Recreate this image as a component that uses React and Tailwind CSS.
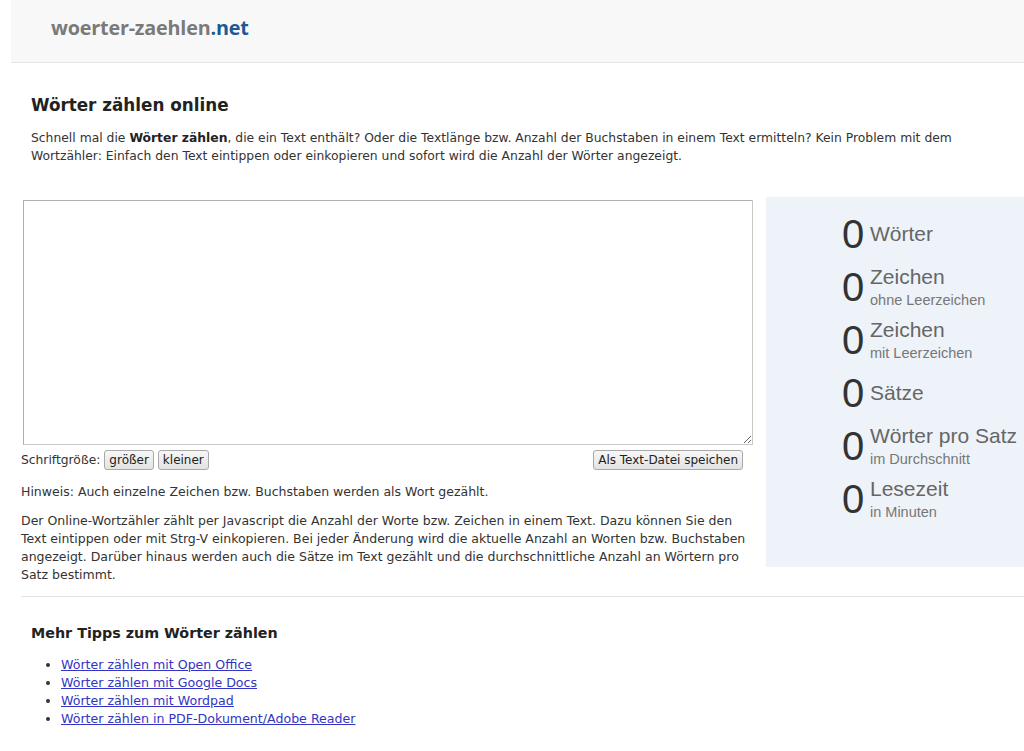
import React from 'react';

const body = { fontFamily: '"DejaVu Sans", Verdana, sans-serif' };
const arial = { fontFamily: '"Liberation Sans", Arial, sans-serif' };

const stats = [
  { label: 'Wörter' },
  { label: 'Zeichen', sub: 'ohne Leerzeichen' },
  { label: 'Zeichen', sub: 'mit Leerzeichen' },
  { label: 'Sätze' },
  { label: 'Wörter pro Satz', sub: 'im Durchschnitt' },
  { label: 'Lesezeit', sub: 'in Minuten' },
];

const links = [
  'Wörter zählen mit Open Office',
  'Wörter zählen mit Google Docs',
  'Wörter zählen mit Wordpad',
  'Wörter zählen in PDF-Dokument/Adobe Reader',
];

function Btn({ children }) {
  return (
    <button className="h-[20px] px-[4px] text-[12px] leading-[18px] text-[#222] border border-[#a9a9a9] rounded-[3px] bg-gradient-to-b from-[#f7f7f7] to-[#e3e3e3]">
      {children}
    </button>
  );
}

export default function App() {
  return (
    <div className="min-h-screen bg-white text-[#333]" style={body}>
      {/* header */}
      <header className="ml-[11px] h-[63px] bg-[#f8f8f8] border-b border-[#e6e6e6] flex items-center pl-[40px]">
        <div className="text-[19.8px] font-bold tracking-[-0.2px] text-[#7a7a7a] -mt-[6px]" style={{ fontFamily: '"Open Sans", sans-serif' }}>
          woerter-zaehlen<span className="text-[#1b5a92]">.net</span>
        </div>
      </header>

      <main className="pl-[21px]">
        <section className="pl-[10px] w-[990px]">
          <h1 className="mt-[32px] text-[16.8px] leading-[20px] font-bold text-[#222]">Wörter zählen online</h1>
          <p className="mt-[14px] text-[12.35px] leading-[18px]">
            Schnell mal die <b className="text-[#222]">Wörter zählen</b>, die ein Text enthält? Oder die Textlänge bzw. Anzahl der Buchstaben in einem Text ermitteln? Kein Problem mit dem Wortzähler: Einfach den Text eintippen oder einkopieren und sofort wird die Anzahl der Wörter angezeigt.
          </p>
        </section>

        <div className="mt-[32px] flex gap-[13px]">
          <div className="w-[732px]">
            <textarea className="mt-[3px] ml-[2px] block w-[730px] h-[245px] border border-[#c8c8c8] border-t-[#b0b0b0] border-l-[#b0b0b0] bg-white outline-none" />
            <div className="mt-[5px] flex items-center text-[12.3px] pr-[10px]">
              <span className="mr-[4px]">Schriftgröße:</span>
              <div className="flex gap-[4px]">
                <Btn>größer</Btn>
                <Btn>kleiner</Btn>
              </div>
              <div className="ml-auto">
                <Btn>Als Text-Datei speichen</Btn>
              </div>
            </div>
            <p className="mt-[13px] text-[12.5px] leading-[18px]">Hinweis: Auch einzelne Zeichen bzw. Buchstaben werden als Wort gezählt.</p>
            <p className="mt-[11px] text-[12.5px] leading-[18px] pr-[4px]">
              Der Online-Wortzähler zählt per Javascript die Anzahl der Worte bzw. Zeichen in einem Text. Dazu können Sie den Text eintippen oder mit Strg-V einkopieren. Bei jeder Änderung wird die aktuelle Anzahl an Worten bzw. Buchstaben angezeigt. Darüber hinaus werden auch die Sätze im Text gezählt und die durchschnittliche Anzahl an Wörtern pro Satz bestimmt.
            </p>
          </div>

          <aside className="w-[258px] h-[370px] bg-[#eef3f9] pt-[10px] pl-[76px]" style={arial}>
            {stats.map((s, i) => (
              <div key={i} className="h-[53px] flex items-center">
                <div className="w-[28px] text-[40px] leading-none text-[#333]">0</div>
                <div className="text-[#666]">
                  <div className={`text-[21px] leading-[22px] ${s.sub ? 'pt-[2px]' : ''}`}>{s.label}</div>
                  {s.sub && <div className="text-[14.5px] leading-[18px] mt-[3px] text-[#777]">{s.sub}</div>}
                </div>
              </div>
            ))}
          </aside>
        </div>

        <hr className="mt-[12px] border-0 border-t border-[#e2e2e2]" />

        <section className="pl-[10px]">
          <h2 className="mt-[27px] text-[14.3px] leading-[18px] font-bold text-[#222]">Mehr Tipps zum Wörter zählen</h2>
          <ul className="mt-[14px] pl-[30px] list-disc text-[12.6px] leading-[18px]">
            {links.map((l) => (
              <li key={l}>
                <a href="#" className="text-[#3434c4] underline">{l}</a>
              </li>
            ))}
          </ul>
        </section>
      </main>
    </div>
  );
}
